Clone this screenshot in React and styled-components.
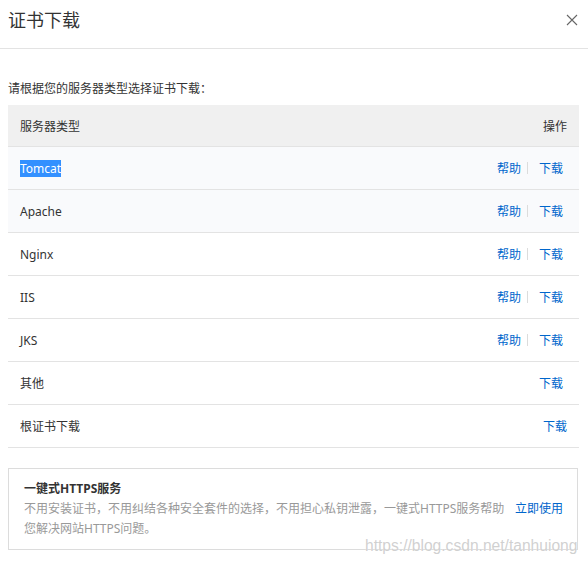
import styled, { createGlobalStyle } from "styled-components";

const GlobalStyle = createGlobalStyle`
  html, body {
    margin: 0;
    padding: 0;
    background: #fff;
  }
  body {
    font-family: "Noto Sans", "Noto Sans CJK SC", sans-serif;
    color: #333;
  }
`;

const Dialog = styled.div`
  position: relative;
  width: 588px;
  height: 564px;
  overflow: hidden;
  background: #fff;
`;

const Header = styled.div`
  height: 49px;
  border-bottom: 1px solid #e3e3e3;
  display: flex;
  align-items: center;
  justify-content: space-between;
  padding: 0 10px 0 8px;
  box-sizing: border-box;
`;

const Title = styled.h1`
  margin: 0 0 8px;
  font-size: 18px;
  font-weight: 400;
  color: #333;
  line-height: 24px;
`;

const CloseButton = styled.button`
  border: none;
  background: none;
  padding: 0;
  width: 12px;
  height: 12px;
  margin-bottom: 8px;
  display: flex;
  cursor: pointer;
`;

const Body = styled.div`
  padding: 31px 9px 0 8px;
`;

const Prompt = styled.p`
  margin: 0 0 7px;
  font-size: 12px;
  line-height: 18px;
  color: #333;
`;

const Table = styled.table`
  width: 100%;
  border-collapse: collapse;
  font-size: 12px;
`;

const HeadCell = styled.th`
  height: 41px;
  padding: 0 ${(p) => (p.$right ? "12px" : "0")} 0 12px;
  background: #f0f0f0;
  font-weight: 400;
  color: #333;
  text-align: ${(p) => (p.$right ? "right" : "left")};
  border-bottom: 1px solid #e3e3e3;
`;

const Row = styled.tr`
  background: ${(p) => (p.$tint ? "#f9fafc" : "#fff")};
`;

const Cell = styled.td`
  height: 42px;
  padding: 0 ${(p) => p.$pr || "0"} 0 12px;
  color: #333;
  text-align: ${(p) => (p.$right ? "right" : "left")};
  border-bottom: 1px solid #e3e3e3;
`;

const Selected = styled.span`
  background: #3390ff;
  color: #fff;
`;

const Link = styled.a`
  color: #0066cc;
  text-decoration: none;
  cursor: pointer;
`;

const Divider = styled.span`
  display: inline-block;
  width: 1px;
  height: 12px;
  background: #dcdcdc;
  margin: 0 11px 0 6px;
  vertical-align: -1px;
`;

const Promo = styled.div`
  margin-top: 20px;
  border: 1px solid #dcdcdc;
  padding: 10px 15px;
  width: 570px;
  box-sizing: border-box;
  font-size: 12px;
  line-height: 20px;
`;

const PromoTitle = styled.div`
  font-weight: 700;
  color: #333;
`;

const PromoBody = styled.div`
  display: flex;
  align-items: flex-start;
`;

const PromoText = styled.p`
  margin: 0;
  width: 479px;
  flex: none;
  white-space: nowrap;
  color: #999;
`;

const PromoLink = styled(Link)`
  margin-left: 12px;
  white-space: nowrap;
`;

const Watermark = styled.div`
  position: absolute;
  left: 365px;
  top: 537px;
  font-family: "Liberation Sans", Arial, sans-serif;
  font-size: 15.6px;
  color: rgba(200, 200, 200, 0.85);
  text-shadow: 0 0 1px #fff;
  pointer-events: none;
`;

const servers = [
  { name: "Tomcat", help: true, tint: true, selected: true },
  { name: "Apache", help: true, tint: true },
  { name: "Nginx", help: true },
  { name: "IIS", help: true },
  { name: "JKS", help: true },
  { name: "其他", help: false },
  { name: "根证书下载", help: false, root: true },
];

const App = () => {
  return (
    <Dialog>
      <GlobalStyle />
      <Header>
        <Title>证书下载</Title>
        <CloseButton aria-label="关闭">
          <svg width="12" height="12" viewBox="0 0 12 12">
            <path d="M1 1L11 11M11 1L1 11" stroke="#666" strokeWidth="1.1" fill="none" />
          </svg>
        </CloseButton>
      </Header>
      <Body>
        <Prompt>请根据您的服务器类型选择证书下载：</Prompt>
        <Table>
          <thead>
            <tr>
              <HeadCell>服务器类型</HeadCell>
              <HeadCell $right>操作</HeadCell>
            </tr>
          </thead>
          <tbody>
            {servers.map((s) => (
              <Row key={s.name} $tint={s.tint}>
                <Cell>{s.selected ? <Selected>{s.name}</Selected> : s.name}</Cell>
                <Cell $right $pr={s.root ? "12px" : "16px"}>
                  {s.help && (
                    <>
                      <Link>帮助</Link>
                      <Divider />
                    </>
                  )}
                  <Link>下载</Link>
                </Cell>
              </Row>
            ))}
          </tbody>
        </Table>
        <Promo>
          <PromoTitle>一键式HTTPS服务</PromoTitle>
          <PromoBody>
            <PromoText>
              不用安装证书，不用纠结各种安全套件的选择，不用担心私钥泄露，一键式HTTPS服务帮助
              <br />
              您解决网站HTTPS问题。
            </PromoText>
            <PromoLink>立即使用</PromoLink>
          </PromoBody>
        </Promo>
      </Body>
      <Watermark>https://blog.csdn.net/tanhuiong</Watermark>
    </Dialog>
  );
};

export default App;
